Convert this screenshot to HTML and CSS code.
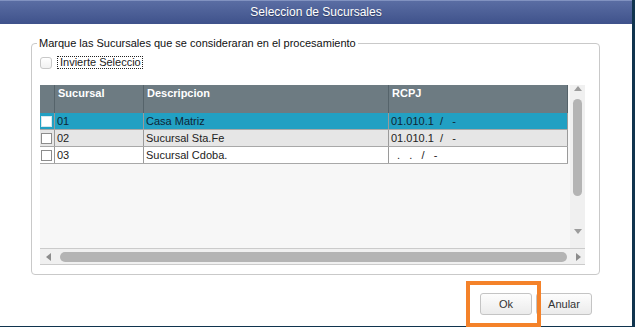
FILE: index.html
```html
<!DOCTYPE html>
<html lang="es">

<head>
    <meta charset="UTF-8">
    <title>Seleccion de Sucursales</title>
    <link rel="stylesheet" href="styles.css">
</head>

<body>
    <div class="window">
        <div class="titlebar">Seleccion de Sucursales</div>

        <fieldset class="group">
            <legend>Marque las Sucursales que se consideraran en el procesamiento</legend>

            <div class="invert">
                <span class="check-round"></span>
                <span class="invert-label">Invierte Seleccio</span>
            </div>

            <!-- Grilla de sucursales -->
            <div class="grid">
                <div class="table">
                    <div class="row head">
                        <div class="cell ind"></div>
                        <div class="cell c1">Sucursal</div>
                        <div class="cell c2">Descripcion</div>
                        <div class="cell c3">RCPJ</div>
                    </div>
                    <div class="row selected">
                        <div class="cell ind"><span class="box"></span></div>
                        <div class="cell c1">01</div>
                        <div class="cell c2">Casa Matriz</div>
                        <div class="cell c3">01.010.1  /   -</div>
                    </div>
                    <div class="row alt">
                        <div class="cell ind"><span class="box"></span></div>
                        <div class="cell c1">02</div>
                        <div class="cell c2">Sucursal Sta.Fe</div>
                        <div class="cell c3">01.010.1  /   -</div>
                    </div>
                    <div class="row">
                        <div class="cell ind"><span class="box"></span></div>
                        <div class="cell c1">03</div>
                        <div class="cell c2">Sucursal Cdoba.</div>
                        <div class="cell c3">  .   .   /   -</div>
                    </div>
                </div>

                <div class="vscroll">
                    <span class="arrow up"></span>
                    <span class="vthumb"></span>
                    <span class="arrow down"></span>
                </div>

                <div class="hscroll">
                    <span class="arrow left"></span>
                    <span class="hthumb"></span>
                    <span class="arrow right"></span>
                </div>
            </div>
        </fieldset>

        <div class="buttons">
            <button class="btn ok">Ok</button>
            <button class="btn cancel">Anular</button>
        </div>

        <div class="highlight"></div>
    </div>
</body>

</html>
```

FILE: styles.css
```css
body {
    margin: 0;
    font-family: "Liberation Sans", Arial, sans-serif;
    font-size: 11px;
    color: #222;
    background-color: #fff;
}

.window {
    position: relative;
    width: 632px;
    height: 326px;
    border-right: 3px solid #10344e;
    border-bottom: 1px solid #10344e;
    background-color: #fff;
}

.titlebar {
    height: 24px;
    box-sizing: border-box;
    border-top: 1px solid #8192c0;
    background: linear-gradient(#5a6da3, #3f528b);
    color: #fff;
    font-size: 12px;
    line-height: 23px;
    text-align: center;
    text-shadow: 0 1px 1px rgba(0, 0, 0, 0.35);
}

.group {
    margin: 13px 32px 0 31px;
    padding: 0 14px 9px 8px;
    border: 1px solid #c9c9c9;
    border-radius: 4px;
    min-width: 0;
}

.group legend {
    margin-left: -3px;
    padding: 0 2px;
    line-height: 13px;
    color: #111;
}

.invert {
    display: flex;
    align-items: center;
    height: 13px;
    margin-top: 6px;
}

.check-round {
    width: 12px;
    height: 12px;
    box-sizing: border-box;
    margin-right: 5px;
    border: 1px solid #c8c8c8;
    border-radius: 3px;
    background: linear-gradient(#fff, #f1f1f1);
}

.invert-label {
    height: 13px;
    box-sizing: border-box;
    padding: 0 1px 0 2px;
    border: 1px dotted #222;
    line-height: 11px;
    white-space: nowrap;
}

.grid {
    display: grid;
    grid-template-columns: 1fr 15px;
    grid-template-rows: 163px 17px;
    width: 545px;
    margin-top: 16px;
}

.table {
    background-color: #f7f7f7;
    overflow: hidden;
}

.row {
    display: flex;
    width: 528px;
    height: 17px;
    box-sizing: border-box;
    border-bottom: 1px solid #a8a8a8;
    background-color: #fff;
    line-height: 16px;
}

.row.head {
    height: 28px;
    border-bottom: none;
    background-color: #6d7b82;
    color: #fff;
    font-weight: bold;
    line-height: 13px;
}

.row.selected {
    background-color: #22a0c3;
    color: #0e2636;
}

.row.alt {
    background-color: #e6e6e6;
}

.cell {
    box-sizing: border-box;
    padding-left: 2px;
    border-right: 1px solid #9a9a9a;
    white-space: pre;
    overflow: hidden;
}

.head .cell {
    padding: 2px 0 0 3px;
    border-right-color: #55636a;
}

.cell.ind {
    display: flex;
    align-items: center;
    width: 15px;
    padding: 0 0 0 1px;
}

.cell.c1 {
    width: 89px;
}

.cell.c2 {
    width: 245px;
}

.cell.c3 {
    width: 179px;
}

.box {
    width: 11px;
    height: 11px;
    box-sizing: border-box;
    border: 1px solid #8c8c8c;
    background-color: #fff;
}

.selected .box {
    border-color: #d8e8ee;
}

.vscroll {
    display: flex;
    flex-direction: column;
    align-items: center;
    background-color: #f0f0f0;
}

.vthumb {
    width: 9px;
    height: 97px;
    margin-top: 8px;
    border-radius: 5px;
    background-color: #b4b4b4;
}

.arrow {
    width: 0;
    height: 0;
    border: 4px solid transparent;
}

.arrow.up {
    margin-top: 1px;
    border-bottom: 5px solid #9c9c9c;
    border-top: none;
}

.arrow.down {
    margin-top: auto;
    margin-bottom: 14px;
    border-top: 5px solid #9c9c9c;
    border-bottom: none;
}

.hscroll {
    grid-column: 1 / 3;
    display: flex;
    align-items: center;
    box-sizing: border-box;
    padding-left: 6px;
    border-top: 1px solid #cbcbcb;
    border-bottom: 1px solid #cbcbcb;
    background-color: #f0f0f0;
}

.arrow.left {
    border-right: 5px solid #8c8c8c;
    border-left: none;
}

.arrow.right {
    margin-left: 9px;
    border-left: 5px solid #8c8c8c;
    border-right: none;
}

.hthumb {
    width: 507px;
    height: 10px;
    margin-left: 9px;
    border-radius: 5px;
    background-color: #b4b4b4;
}

.buttons {
    display: flex;
    justify-content: flex-end;
    gap: 4px;
    margin: 18px 40px 0 0;
}

.btn {
    height: 22px;
    padding: 0;
    border: 1px solid #c4c4c4;
    border-radius: 3px;
    background: linear-gradient(#fdfdfd, #ebebeb);
    color: #333;
    font-family: "Liberation Sans", Arial, sans-serif;
    font-size: 11px;
}

.btn.ok {
    width: 52px;
}

.btn.cancel {
    width: 56px;
}

.highlight {
    position: absolute;
    left: 466px;
    top: 281px;
    width: 75px;
    height: 46px;
    box-sizing: border-box;
    border: 4px solid #f4822a;
}
```
